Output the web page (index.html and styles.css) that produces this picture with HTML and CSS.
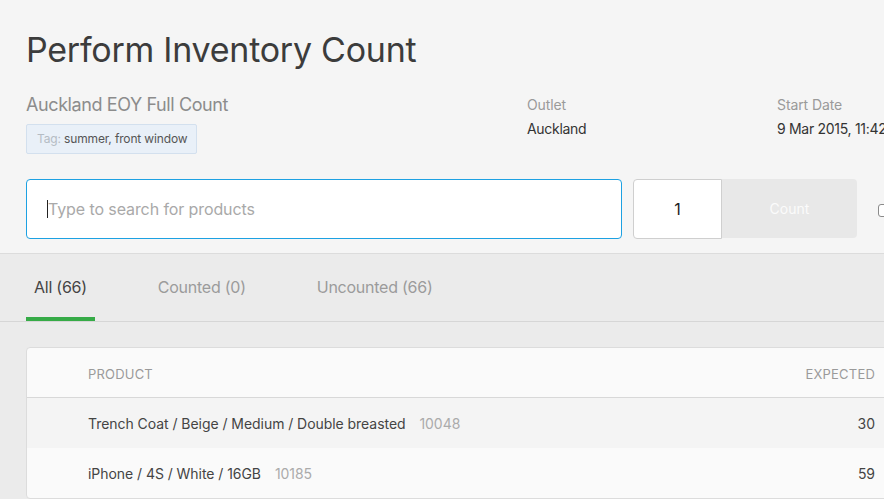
FILE: index.html
```html
<!DOCTYPE html>
<html lang="en">
<head>
<meta charset="utf-8">
<title>Perform Inventory Count</title>
<link rel="stylesheet" href="styles.css">
</head>
<body>
<div class="page">
  <header class="top">
    <h1 class="title">Perform Inventory Count</h1>
    <div class="meta">
      <div class="meta-main">
        <div class="subtitle">Auckland EOY Full Count</div>
        <div class="tag"><span class="tag-label">Tag:</span> summer, front window</div>
      </div>
      <div class="meta-col meta-outlet">
        <div class="meta-label">Outlet</div>
        <div class="meta-value">Auckland</div>
      </div>
      <div class="meta-col">
        <div class="meta-label">Start Date</div>
        <div class="meta-value">9 Mar 2015, 11:42 am</div>
      </div>
    </div>
    <div class="search-row">
      <div class="search"><span class="caret"></span><span class="placeholder">Type to search for products</span></div>
      <div class="qty-group">
        <div class="qty">1</div>
        <div class="count-btn">Count</div>
      </div>
      <span class="checkbox"></span>
    </div>
  </header>
  <nav class="tabs">
    <div class="tab active">All (66)</div>
    <div class="tab">Counted (0)</div>
    <div class="tab">Uncounted (66)</div>
  </nav>
  <main class="content">
    <div class="card">
      <div class="row head">
        <div class="cell">PRODUCT</div>
        <div class="cell num">EXPECTED</div>
        <div class="cell num">COUNTED</div>
      </div>
      <div class="row alt">
        <div class="cell">Trench Coat / Beige / Medium / Double breasted <span class="sku">10048</span></div>
        <div class="cell num">30</div>
        <div class="cell num"></div>
      </div>
      <div class="row">
        <div class="cell">iPhone / 4S / White / 16GB <span class="sku">10185</span></div>
        <div class="cell num">59</div>
        <div class="cell num"></div>
      </div>
    </div>
  </main>
</div>
</body>
</html>
```
FILE: styles.css
```css
html { overflow: hidden; }
body {
  margin: 0;
  background: #ebebeb;
  font-family: "Inter", "Liberation Sans", sans-serif;
  color: #444;
  width: 1040px;
}
.top {
  box-sizing: border-box;
  background: #f5f5f5;
  border-bottom: 1px solid #dcdcdc;
  padding: 29px 26px 0;
  height: 254px;
}
.title {
  margin: 0;
  font-weight: 400;
  font-size: 34px;
  line-height: 42px;
  color: #3c3c3c;
  letter-spacing: -0.25px;
}
.meta {
  display: flex;
  margin-top: 22px;
  height: 56px;
}
.meta-main { width: 501px; }
.subtitle {
  font-size: 18px;
  line-height: 24px;
  color: #8c8c8c;
  letter-spacing: -0.4px;
}
.tag {
  display: inline-block;
  margin-top: 7px;
  background: #e9f0f8;
  border: 1px solid #d3e0ee;
  border-radius: 2px;
  padding: 0 9px 0 10px;
  font-size: 12px;
  line-height: 28px;
  color: #555;
  letter-spacing: -0.15px;
}
.tag-label { color: #b5bcc4; }
.meta-outlet { width: 250px; }
.meta-label {
  font-size: 14px;
  line-height: 20px;
  color: #9a9a9a;
  margin-top: 2px;
  letter-spacing: -0.1px;
}
.meta-value {
  font-size: 14px;
  line-height: 20px;
  color: #333;
  margin-top: 4px;
  white-space: nowrap;
  letter-spacing: -0.3px;
}
.search-row {
  display: flex;
  align-items: center;
  margin-top: 30px;
}
.search {
  box-sizing: border-box;
  width: 596px;
  height: 60px;
  background: #fff;
  border: 1px solid #1da1e2;
  border-radius: 4px;
  display: flex;
  align-items: center;
  padding-left: 20px;
  font-size: 16px;
}
.caret {
  width: 1px;
  height: 18px;
  background: #222;
}
.placeholder { color: #a9a9a9; letter-spacing: -0.1px; }
.qty-group {
  display: flex;
  margin-left: 11px;
}
.qty {
  box-sizing: border-box;
  width: 89px;
  height: 60px;
  background: #fff;
  border: 1px solid #cfcfcf;
  border-radius: 4px 0 0 4px;
  display: flex;
  align-items: center;
  justify-content: center;
  font-size: 16px;
  color: #222;
}
.count-btn {
  width: 135px;
  height: 59px;
  align-self: flex-start;
  background: #e8e8e8;
  border-radius: 0 4px 4px 0;
  display: flex;
  align-items: center;
  justify-content: center;
  font-size: 14px;
  color: #fbfbfb;
}
.checkbox {
  box-sizing: border-box;
  width: 13px;
  height: 13px;
  margin-left: 21px;
  margin-top: 2px;
  border: 1px solid #8a8a8a;
  border-radius: 3px;
  background: #fff;
}
.tabs {
  display: flex;
  gap: 55px;
  padding: 0 26px;
  height: 67px;
  border-bottom: 1px solid #d6d6d6;
}
.tab {
  box-sizing: border-box;
  height: 67px;
  padding: 0 8px;
  font-size: 16px;
  line-height: 66px;
  color: #9b9b9b;
  letter-spacing: -0.25px;
  border-bottom: 4px solid transparent;
}
.tab.active {
  color: #444;
  border-bottom-color: #36ab47;
}
.content {
  padding: 25px 26px;
}
.card {
  background: #fafafa;
  border: 1px solid #dcdcdc;
  border-radius: 4px;
  overflow: hidden;
}
.row {
  display: grid;
  grid-template-columns: 667px 120px 100px;
  padding-left: 61px;
  height: 50px;
  align-items: center;
  font-size: 14px;
  color: #444;
  letter-spacing: -0.05px;
}
.row.head {
  height: 49px;
  border-bottom: 1px solid #d8d8d8;
  font-size: 13px;
  color: #9a9a9a;
  letter-spacing: 0.2px;
}
.row.head .cell { padding-top: 2px; }
.row.alt { background: #f4f4f4; }
.num { text-align: right; }
.sku {
  color: #ababab;
  margin-left: 10px;
}
```
